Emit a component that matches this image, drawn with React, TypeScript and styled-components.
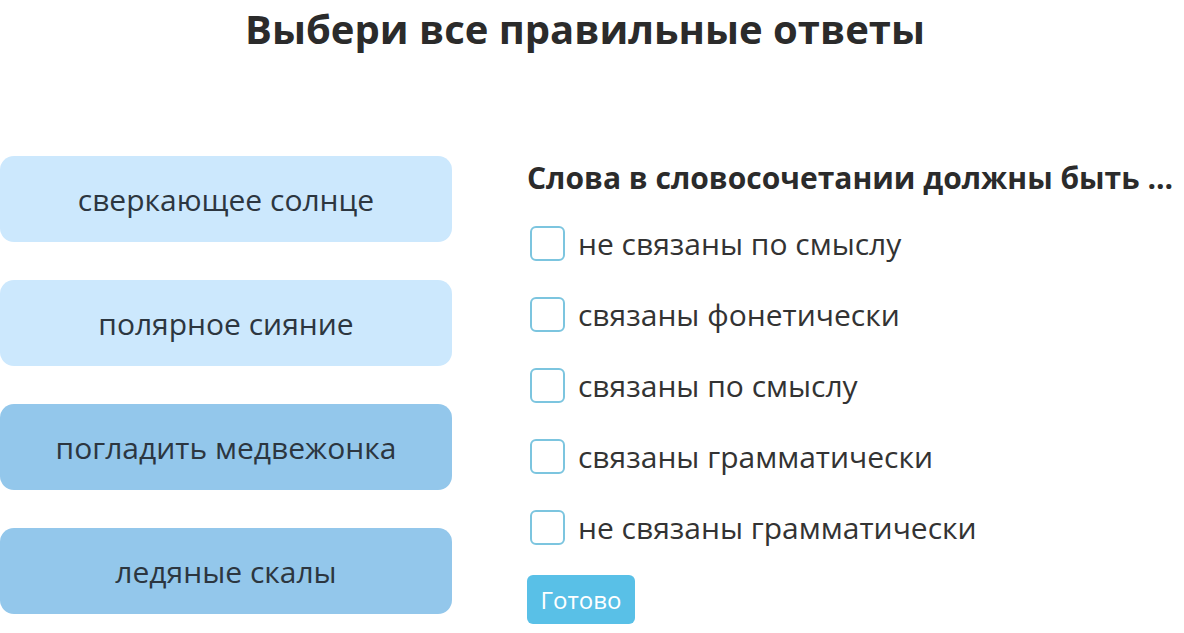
import React from "react";
import styled, { createGlobalStyle } from "styled-components";

const Global = createGlobalStyle`
  html, body { margin: 0; padding: 0; background: #fff; }
  body { font-family: "Open Sans", "Liberation Sans", sans-serif; color: #2b2f33; }
`;

const Page = styled.div`
  width: 1184px;
  height: 633px;
  overflow: hidden;
  box-sizing: border-box;
`;

const Title = styled.h1`
  margin: 0;
  padding-top: 0;
  padding-right: 14px;
  text-align: center;
  font-size: 40px;
  line-height: 57px;
  font-weight: 700;
  color: #2b2b2b;
`;

const Main = styled.div`
  display: flex;
  margin-top: 99px;
  gap: 75px;
`;

const Cards = styled.div`
  width: 452px;
  display: flex;
  flex-direction: column;
  gap: 38px;
`;

const Card = styled.div<{ $dark?: boolean }>`
  height: 86px;
  border-radius: 14px;
  background: ${(p) => (p.$dark ? "#93c7eb" : "#cce8fd")};
  display: flex;
  align-items: center;
  justify-content: center;
  font-size: 30px;
  color: #2c3640;
`;

const Right = styled.div`
  display: flex;
  flex-direction: column;
  margin-top: 2px;
`;

const Question = styled.div`
  font-size: 30px;
  font-weight: 700;
  line-height: 40px;
  color: #2b2b2b;
  margin-bottom: 28px;
`;

const Option = styled.label`
  display: flex;
  align-items: center;
  gap: 13px;
  height: 71px;
  margin-top: -18px;
  margin-bottom: 18px;
  font-size: 30px;
  color: #333;
  padding-left: 3px;
`;

const Box = styled.span`
  width: 31px;
  height: 31px;
  border: 2px solid #7cc5df;
  border-radius: 6px;
  background: #fff;
  flex: none;
`;

const Button = styled.button`
  align-self: flex-start;
  margin-top: -6px;
  height: 49px;
  width: 108px;
  border: none;
  border-radius: 6px;
  background: #59c0e7;
  color: #fff;
  font-family: "Open Sans", "Liberation Sans", sans-serif;
  font-size: 24px;
  padding: 0;
`;

const options = [
  "не связаны по смыслу",
  "связаны фонетически",
  "связаны по смыслу",
  "связаны грамматически",
  "не связаны грамматически",
];

export default function App() {
  return (
    <Page>
      <Global />
      <Title>Выбери все правильные ответы</Title>
      <Main>
        <Cards>
          <Card>сверкающее солнце</Card>
          <Card>полярное сияние</Card>
          <Card $dark>погладить медвежонка</Card>
          <Card $dark>ледяные скалы</Card>
        </Cards>
        <Right>
          <Question>Слова в словосочетании должны быть ...</Question>
          {options.map((o) => (
            <Option key={o}>
              <Box />
              {o}
            </Option>
          ))}
          <Button>Готово</Button>
        </Right>
      </Main>
    </Page>
  );
}
